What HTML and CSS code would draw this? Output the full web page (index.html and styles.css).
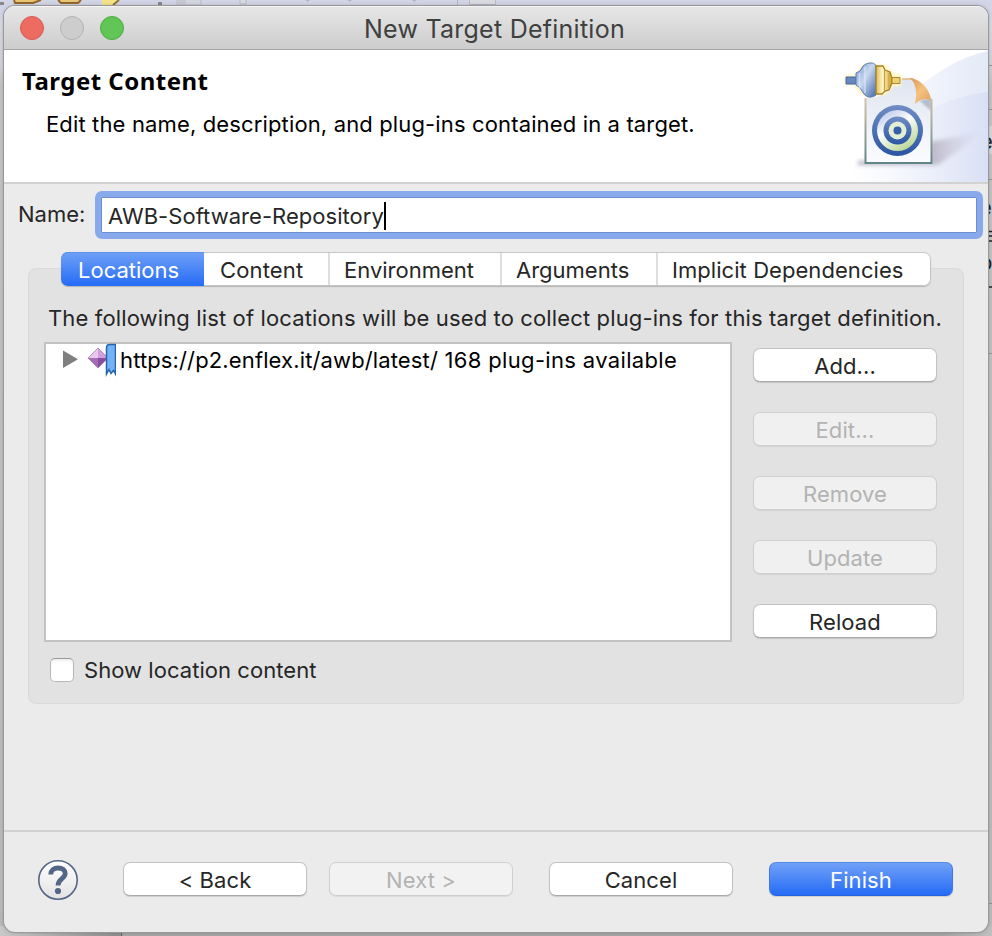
FILE: index.html
```html
<!DOCTYPE html>
<html lang="en">
<head>
<meta charset="utf-8">
<title>New Target Definition</title>
<link rel="stylesheet" href="styles.css">
</head>
<body>
<svg class="backdrop" width="992" height="936" viewBox="0 0 992 936" aria-hidden="true">
  <defs>
    <linearGradient id="side" x1="0" y1="0" x2="0" y2="1">
      <stop offset="0" stop-color="#d9dcea"/><stop offset=".07" stop-color="#d0d1d8"/><stop offset=".09" stop-color="#c4c4c4"/><stop offset="1" stop-color="#bababa"/>
    </linearGradient>
    <linearGradient id="base" x1="0" y1="0" x2="1" y2="0">
      <stop offset="0" stop-color="#c8c8c8"/><stop offset=".12" stop-color="#8e8e8e"/><stop offset=".125" stop-color="#a6a6a6"/><stop offset=".95" stop-color="#a6a6a6"/><stop offset="1" stop-color="#bfbfbf"/>
    </linearGradient>
  </defs>
  <rect width="992" height="936" fill="url(#side)"/>
  <rect width="992" height="18" fill="#d2d5e6"/>
  <rect y="926" width="992" height="10" fill="url(#base)"/>
  <path d="M121.500 930v6" stroke="#666"/>
  <path d="M14 0l1 3h18l8-3M58 0l3 3h17l3-3" fill="#e8c574" stroke="#93662b" stroke-width="2"/>
  <path d="M102 0h18l-6 6h-12z" fill="#f4e487"/><path d="M113 5l6-5" stroke="#8c703f" stroke-width="2"/>
  <path d="M0 2h4v3h-4zM158 2h4v3h-4z" fill="#8b8888"/>
  <path d="M176 0h26v6h-26z" fill="#c6c9d1"/><path d="M186 0h14v4h-14z" fill="#d3d6de"/>
  <path d="M240 0v4h6V0M469.500 0v4.500h26V0" fill="#d9dbe0" stroke="#b6b8c3"/>
  <path d="M457.500 0v6" stroke="#b0b3c4"/>
  <path d="M305 0h5l-2 2zM347 0h5l-2 2zM412 0h5l-3 2z" fill="#b4b7c4"/>
  <path d="M988 65.500h4M988 109.500h4M988 179.500h4M988 353.500h4M988 903.500h4" stroke="#929292"/>
  <path d="M988 126h4v28h-4z" fill="#d5d5d5"/>
  <g font-family="Inter, sans-serif" font-size="22" fill="#222"><text x="980" y="149">e</text><text x="979" y="215">e</text><text x="979" y="270">p</text></g>
  <path d="M988 231.500h4M988 236h4M988 241h4M988 287h4" stroke="#222" stroke-width="1.500"/>
</svg>
<main class="window">
  <header class="titlebar">
    <span class="light close"></span><span class="light minimize"></span><span class="light maximize"></span>
    <h1>New Target Definition</h1>
  </header>
  <section class="banner">
    <div class="intro">
      <h2>Target Content</h2>
      <p>Edit the name, description, and plug-ins contained in a target.</p>
    </div>
    <svg class="art" width="168" height="132" viewBox="820 50 168 132" aria-hidden="true">
      <defs>
        <linearGradient id="sweep" x1="0" y1="0" x2="1" y2="0"><stop offset="0" stop-color="#fff"/><stop offset=".4" stop-color="#f7f9fd"/><stop offset="1" stop-color="#e4e9f7"/></linearGradient>
        <linearGradient id="sweep2" x1="0" y1="0" x2="1" y2="0"><stop offset="0" stop-color="#fff" stop-opacity="0"/><stop offset="1" stop-color="#d9e0f5"/></linearGradient>
        <linearGradient id="shade" x1="0" y1="0" x2="1" y2="0"><stop offset="0" stop-color="#b5afc2"/><stop offset=".6" stop-color="#c0bccd"/><stop offset="1" stop-color="#dce1f2" stop-opacity=".2"/></linearGradient>
        <linearGradient id="paper" x1="0" y1="0" x2="0" y2="1"><stop offset="0" stop-color="#dfe5f0"/><stop offset="1" stop-color="#fbfcff"/></linearGradient>
        <linearGradient id="edge" x1="0" y1="0" x2="0" y2="1"><stop offset="0" stop-color="#d7c5a9"/><stop offset="1" stop-color="#5f8588"/></linearGradient>
        <linearGradient id="bluering" x1="0" y1="0" x2="0" y2="1"><stop offset="0" stop-color="#6f8dc5"/><stop offset="1" stop-color="#2a55a3"/></linearGradient>
        <linearGradient id="greenring" x1=".2" y1="0" x2=".8" y2="1"><stop offset="0" stop-color="#b9c8ea"/><stop offset=".4" stop-color="#fbfdfb"/><stop offset="1" stop-color="#b3d28b"/></linearGradient>
        <linearGradient id="plugblue" x1="0" y1="0" x2="1" y2="1"><stop offset="0" stop-color="#799cd0"/><stop offset=".45" stop-color="#c8d8f0"/><stop offset="1" stop-color="#4269aa"/></linearGradient>
        <linearGradient id="pluggold" x1="0" y1="0" x2="1" y2="0"><stop offset="0" stop-color="#e0b951"/><stop offset=".4" stop-color="#fff6c5"/><stop offset="1" stop-color="#d5a52f"/></linearGradient>
        <linearGradient id="curl" x1="0" y1="0" x2="1" y2="1"><stop offset="0" stop-color="#d99654"/><stop offset=".5" stop-color="#f5c17f"/><stop offset="1" stop-color="#dfa05c"/></linearGradient>
        <filter id="soft" x="-30%" y="-30%" width="160%" height="160%"><feGaussianBlur stdDeviation="2"/></filter>
        <filter id="glow" x="-30%" y="-30%" width="160%" height="160%"><feGaussianBlur stdDeviation="1.200"/></filter>
      </defs>
      <path d="M845 182C884 118 925 65 988 51V182z" fill="url(#sweep)"/>
      <path d="M845 182C887 127 935 98 988 92V182z" fill="url(#sweep2)"/>
      <path d="M930 142L986 131 938 165H858V161h72z" fill="url(#shade)" filter="url(#soft)"/>
      <path d="M865 98q14 1 24-8l8-11h16l18 20v64h-66z" fill="url(#paper)"/>
      <path d="M865.500 98v65h66V99" fill="none" stroke="url(#edge)" stroke-width="2"/>
      <path d="M902 79h11" stroke="#e4b681" stroke-width="1.500"/>
      <path d="M919 100l12 11V98z" fill="#8f96a6" opacity=".55" filter="url(#glow)"/>
      <path d="M910 78c10 1 20 11 21 22-6-2-11-1-16 4 2-9 2-20-5-26z" fill="url(#curl)"/>
      <circle cx="897.500" cy="130.500" r="25.500" fill="url(#bluering)"/>
      <circle cx="897.500" cy="130.500" r="20.500" fill="url(#greenring)"/>
      <circle cx="897.500" cy="130.500" r="14" fill="url(#bluering)"/>
      <circle cx="897.500" cy="130.500" r="9" fill="#e2efd5"/>
      <circle cx="897.500" cy="130.500" r="4" fill="#385fa9"/>
      <path d="M846 76h10l5-9 9-4 8 3h8l7 9h7v10h-7l-8 9h-8l-7 3-9-4-6-9h-9z" fill="#fff8cf" stroke="#fff5c4" stroke-width="2.500" filter="url(#glow)"/>
      <path d="M846 77h10v7h-10z" fill="#6688bd" stroke="#47699f"/>
      <path d="M856 73l4-2 3-5 3-2c5-2 9-1 10 2v29c-4 3-9 3-12-1l-4-6-4-3z" fill="url(#plugblue)" stroke="#5a7eb8"/>
      <path d="M859.500 73v16M865 67v26" stroke="#e1eafa" opacity=".7" stroke-width="1.500"/>
      <path d="M876 66h7l2 4 5 2 2 6v5l-3 7-4 1-3 3h-6z" fill="url(#pluggold)" stroke="#aa8026" stroke-width="1.300"/>
      <path d="M884.500 70v21M889 73v15" stroke="#c59d40"/>
      <path d="M892 77.500h8v6h-8z" fill="#efd174" stroke="#ad862c"/>
    </svg>
  </section>
  <section class="form">
    <div class="name-row"><label>Name:</label>
      <div class="field"><span>AWB-Software-Repository</span><i class="caret"></i></div>
    </div>
    <nav class="tabs">
      <span class="tab active">Locations</span>
      <span class="tab w-content">Content</span>
      <span class="tab w-env">Environment</span>
      <span class="tab w-arg">Arguments</span>
      <span class="tab w-imp">Implicit Dependencies</span>
    </nav>
    <div class="group">
      <p class="hint">The following list of locations will be used to collect plug-ins for this target definition.</p>
      <div class="columns">
        <div class="list">
          <div class="item">
            <svg width="56" height="34" viewBox="60 343 56 34" aria-hidden="true">
              <path d="M63 350.500v17.500l15-8.700z" fill="#7f7f7f"/>
              <path d="M98 348l10 10-10 10-10-10z" fill="#c68bd0"/>
              <path d="M98 348l-10 10h10z" fill="#e6c8ec"/><path d="M98 348l10 10H98z" fill="#d49ddd"/>
              <path d="M88 358h10v10z" fill="#a66bb5"/><path d="M98 358h10l-10 10z" fill="#86509b"/>
              <path d="M98 348l10 10-10 10-10-10z" fill="none" stroke="#a77baf" stroke-width=".7"/>
              <path d="M106.500 374V348c0-2.500 1-3.500 3-3.500h6V374l-2-3.500-2.500 3-2-4z" fill="#72b2f6" stroke="#2864a9" stroke-width="1.500"/>
            </svg>
            <span class="url"><span class="address">https://p2.enflex.it/awb/latest/</span> 168 plug-ins available</span>
          </div>
        </div>
        <div class="actions">
          <div class="btn">Add...</div>
          <div class="btn off">Edit...</div>
          <div class="btn off">Remove</div>
          <div class="btn off">Update</div>
          <div class="btn">Reload</div>
        </div>
      </div>
      <div class="check"><i class="box"></i><span>Show location content</span></div>
    </div>
  </section>
  <footer class="footer">
    <svg class="help" width="40" height="40" viewBox="0 0 40 40" aria-label="Help">
      <defs><linearGradient id="hb" x1="0" y1="0" x2="0" y2="1"><stop offset="0" stop-color="#fff"/><stop offset="1" stop-color="#e2e2e2"/></linearGradient></defs>
      <circle cx="20" cy="20" r="19.200" fill="url(#hb)" stroke="#546688" stroke-width="1.600"/>
      <path d="M12.700 14.500C12.900 10.200 16 8 20 8c4.500 0 7.200 2.100 7.200 5.500 0 5.200-7.200 5.300-7.200 12" fill="none" stroke="#546688" stroke-width="4.800"/>
      <circle cx="20" cy="31" r="3.100" fill="#546688"/>
    </svg>
    <div class="btn back">&lt; Back</div>
    <div class="btn off next">Next &gt;</div>
    <div class="btn cancel">Cancel</div>
    <div class="btn primary finish">Finish</div>
  </footer>
</main>
</body>
</html>
```
FILE: styles.css
```css
* { box-sizing: border-box; }
body { margin: 0; width: 992px; height: 936px; overflow: hidden; position: relative; padding: 6px 4px 4px; font: 22px/28px Inter, "Liberation Sans", sans-serif; color: #262626; white-space: nowrap; }
h1, h2, p { margin: 0; font-weight: 400; }
.backdrop { position: absolute; left: 0; top: 0; z-index: -1; }
.window { width: 984px; height: 926px; display: flex; flex-direction: column; background: #ebebeb; border-radius: 11px; overflow: hidden; box-shadow: 0 0 0 1px #999, 0 0 4px #0004; }
.titlebar { height: 44px; flex: none; display: flex; align-items: center; gap: 16px; padding-left: 16px; background: linear-gradient(#e6e6e6, #cdcdcd); border-bottom: 1px solid #a5a5a5; border-top: 1px solid #f4f4f4; }
.light { width: 24px; height: 24px; border-radius: 50%; border: 1px solid #b2b2b2; background: #cdcdcd; }
.close { background: #ed6b60; border-color: #d65a50; }
.maximize { background: #61c655; border-color: #4eaa43; }
.titlebar h1 { margin-left: 224px; font-size: 25px; letter-spacing: .25px; color: #404040; padding-top: 1px; }
.banner { height: 134px; flex: none; display: flex; justify-content: space-between; background: #fff; border-bottom: 2px solid #d2d2d2; color: #000; }
.intro { padding: 16px 0 0 18px; }
.intro h2 { font: 700 24px/30px "Noto Sans", sans-serif; letter-spacing: .48px; }
.intro p { padding: 14px 0 0 24px; letter-spacing: .14px; }
.form { height: 646px; flex: none; padding: 7px 6px 0 14px; }
.name-row { display: flex; align-items: center; justify-content: space-between; height: 48px; }
.name-row label { margin-top: -2px; }
.field { flex: none; width: 888px; height: 48px; margin-right: -1px; border: 6px solid #88a9eb; border-radius: 7px; background: #fff; display: flex; align-items: center; padding: 2px 0 0 7px; box-shadow: inset 0 0 0 1px #6d8fd0; letter-spacing: .04px; }
.caret { width: 2px; height: 28px; background: #000; margin-top: -1px; }
.tabs { position: relative; z-index: 1; display: flex; width: 870px; height: 34px; margin: 13px 0 0 43px; background: #fff; border-radius: 7px; box-shadow: inset 0 0 0 1px #c6c6c6, 0 1px 1px #0003; }
.tab { display: flex; align-items: center; margin: 1px 0; padding: 2px 0 0 14px; border-left: 2px solid #dedede; }
.active { width: 143px; margin: 0; padding-left: 17px; border: 0; border-radius: 7px 0 0 7px; color: #fff; background: linear-gradient(#70a1f7, #256bf6); box-shadow: inset 0 1px #5f92ee; }
.w-content { width: 124px; border-color: #fff; letter-spacing: .15px; }
.w-env { width: 172px; }
.w-arg { width: 156px; }
.w-imp { width: 275px; border-right: 0; letter-spacing: .06px; }
.group { width: 936px; height: 436px; margin: -18px 0 0 10px; padding: 35px 26px 0 15px; background: #e2e2e2; border: 1px solid #dadada; border-radius: 8px; }
.hint { padding-left: 4px; height: 38px; letter-spacing: .135px; }
.columns { display: flex; justify-content: space-between; }
.list { width: 688px; height: 300px; border: 2px solid #c3c3c3; background: #fff; color: #000; padding-left: 14px; }
.item { display: flex; align-items: center; height: 32px; gap: 4px; }
.url { letter-spacing: .34px; }
.address { letter-spacing: .13px; }
.actions { display: flex; flex-direction: column; gap: 30px; padding-top: 6px; }
.btn { width: 184px; height: 34px; border-radius: 7px; background: #fff; border: 1px solid #c3c3c3; border-bottom-color: #aaa; box-shadow: 0 1px 1px #0002; display: flex; align-items: center; justify-content: center; padding-top: 1px; letter-spacing: .1px; }
.off { color: #b3b3b3; background: #f0f0f0; border-color: #cfcfcf; box-shadow: 0 1px 1px #0001; }
.footer .off { background: #f2f2f2; }
.primary { color: #fff; background: linear-gradient(#70a1f7, #256bf6); border-color: #5489e8 #3d77ea #2463dc; }
.check { display: flex; align-items: center; gap: 10px; height: 28px; margin-top: 14px; padding-left: 6px; letter-spacing: .05px; }
.box { width: 24px; height: 24px; border: 1px solid #b9b9b9; border-top-color: #999; border-radius: 5px; background: #fff; box-shadow: inset 0 2px 2px #0001; }
.footer { flex: 1; display: flex; align-items: flex-start; border-top: 2px solid #d2d2d2; padding: 30px 35px 0 34px; }
.footer .btn { flex: none; }
.help { margin-top: -2px; }
.footer .back { margin: 0 22px 0 45px; }
.footer .cancel { margin: 0 36px; }
```
